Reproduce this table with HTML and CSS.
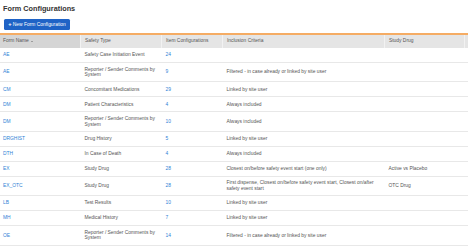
FILE: index.html
```html
<!DOCTYPE html>
<html>
<head>
<meta charset="utf-8">
<link rel="stylesheet" href="styles.css">
</head>
<body>
<div class="page">
  <h1 class="title">Form Configurations</h1>
  <div class="toolbar">
    <button class="btn"><span class="plus">+</span> New Form Configuration</button>
  </div>
  <table class="grid">
    <colgroup>
      <col class="c1"><col class="c2"><col class="c3"><col class="c4"><col class="c5"><col class="c6">
    </colgroup>
    <thead>
      <tr>
        <th class="sorted">Form Name <span class="arrow"></span></th>
        <th>Safety Type</th>
        <th>Item Configurations</th>
        <th>Inclusion Criteria</th>
        <th>Study Drug</th>
        <th></th>
      </tr>
    </thead>
    <tbody>
      <tr><td><a>AE</a></td><td>Safety Case Initiation Event</td><td><a>24</a></td><td></td><td></td><td></td></tr>
      <tr><td><a>AE</a></td><td>Reporter / Sender Comments by System</td><td><a>9</a></td><td>Filtered - in case already or linked by site user</td><td></td><td></td></tr>
      <tr><td><a>CM</a></td><td>Concomitant Medications</td><td><a>29</a></td><td>Linked by site user</td><td></td><td></td></tr>
      <tr><td><a>DM</a></td><td>Patient Characteristics</td><td><a>4</a></td><td>Always included</td><td></td><td></td></tr>
      <tr><td><a>DM</a></td><td>Reporter / Sender Comments by System</td><td><a>10</a></td><td>Always included</td><td></td><td></td></tr>
      <tr><td><a>DRGHIST</a></td><td>Drug History</td><td><a>5</a></td><td>Linked by site user</td><td></td><td></td></tr>
      <tr><td><a>DTH</a></td><td>In Case of Death</td><td><a>4</a></td><td>Always included</td><td></td><td></td></tr>
      <tr><td><a>EX</a></td><td>Study Drug</td><td><a>28</a></td><td>Closest on/before safety event start (one only)</td><td>Active vs Placebo</td><td></td></tr>
      <tr><td><a>EX_OTC</a></td><td>Study Drug</td><td><a>28</a></td><td>First dispense, Closest on/before safety event start, Closest on/after safety event start</td><td>OTC Drug</td><td></td></tr>
      <tr><td><a>LB</a></td><td>Test Results</td><td><a>10</a></td><td>Linked by site user</td><td></td><td></td></tr>
      <tr><td><a>MH</a></td><td>Medical History</td><td><a>7</a></td><td>Linked by site user</td><td></td><td></td></tr>
      <tr><td><a>OE</a></td><td>Reporter / Sender Comments by System</td><td><a>14</a></td><td>Filtered - in case already or linked by site user</td><td></td><td></td></tr>
    </tbody>
  </table>
</div>
</body>
</html>
```
FILE: styles.css
```css
html, body {
  margin: 0;
  padding: 0;
  background: #ffffff;
  overflow: hidden;
}
body {
  font-family: "Liberation Sans", Arial, sans-serif;
  color: #555555;
}
.page {
  padding-top: 3.5px;
}
.title {
  margin: 0 0 0 3px;
  font-size: 7.3px;
  line-height: 9px;
  height: 9px;
  font-weight: bold;
  color: #333333;
}
.toolbar {
  padding: 6px 0 0 4px;
  height: 11.5px;
  margin-bottom: 2.5px;
}
.btn {
  display: block;
  height: 11.5px;
  width: 66px;
  padding: 0;
  border: none;
  border-radius: 1.5px;
  background: #1f63c6;
  color: #ffffff;
  font-family: "Liberation Sans", Arial, sans-serif;
  font-size: 4.9px;
  line-height: 11.5px;
  text-align: center;
  white-space: nowrap;
}
.plus {
  font-weight: bold;
  font-size: 5.6px;
}
.grid {
  width: 468px;
  table-layout: fixed;
  border-collapse: collapse;
  border-top: 2px solid #f5ac64;
  font-size: 4.9px;
  line-height: 5.7px;
}
.c1 { width: 80px; }
.c2 { width: 81px; }
.c3 { width: 61px; }
.c4 { width: 162px; }
.c5 { width: 80px; }
.c6 { width: 4px; }
.grid th {
  height: 13px;
  padding: 0 3px 0 4.5px;
  background: #e5e5e5;
  border-right: 1px solid #f2f2f2;
  text-align: left;
  font-weight: normal;
  color: #555555;
  vertical-align: middle;
}
.grid th.sorted {
  background: #d5d5d5;
  padding-left: 3px;
}
.arrow {
  display: inline-block;
  width: 0;
  height: 0;
  border-left: 1.3px solid transparent;
  border-right: 1.3px solid transparent;
  border-bottom: 1.6px solid #666666;
  vertical-align: 0.5px;
  margin-left: 0.5px;
}
.grid td {
  height: 15px;
  box-sizing: border-box;
  padding: 3.5px 3px 3.5px 4.5px;
  border-bottom: 1px solid #e8e8e8;
  color: #555555;
  vertical-align: middle;
}
.grid td:first-child {
  padding-left: 3px;
}
.grid a {
  color: #2f7fd6;
  text-decoration: none;
}
```
